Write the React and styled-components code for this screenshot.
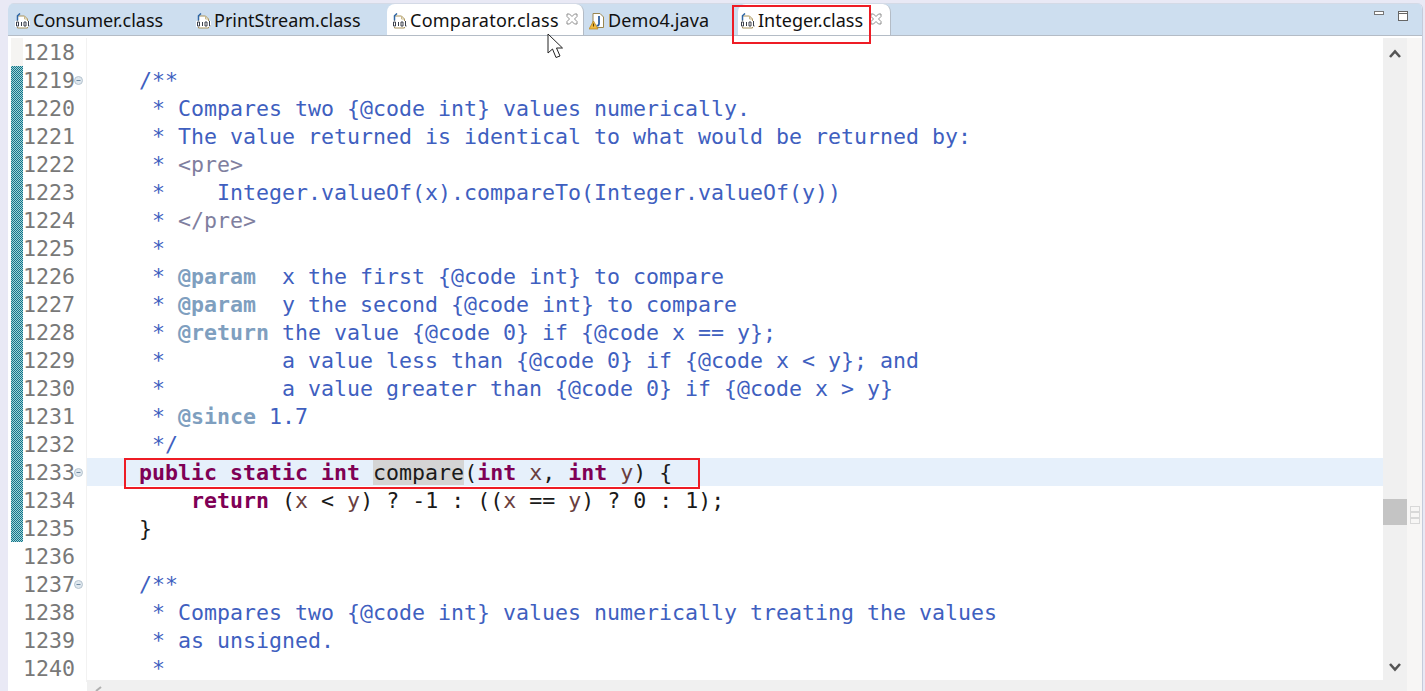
import React from 'react';
import styled, { createGlobalStyle } from 'styled-components';

const GlobalStyle = createGlobalStyle`
  html, body {
    margin: 0;
    padding: 0;
    background: #e9e9f5;
    overflow: hidden;
  }
`;

const Page = styled.div`
  position: relative;
  width: 1425px;
  height: 691px;
  padding: 3px 2px 0 8px;
  box-sizing: border-box;
`;

const Panel = styled.div`
  height: 100%;
  display: flex;
  flex-direction: column;
  background: #fff;
  border-radius: 6px 6px 0 0;
  border-right: 1px solid #c5cbdb;
  overflow: hidden;
`;

const TabBar = styled.div`
  flex: none;
  height: 33px;
  display: flex;
  align-items: flex-end;
  background: #cddeef;
  border-bottom: 1px solid #b4bcc6;
  border-top: 1px solid #d4dae6;
  box-sizing: border-box;
`;

const Tab = styled.div`
  width: ${(p) => p.$w}px;
  height: 31px;
  padding: 2px 0 0 ${(p) => p.$pad}px;
  box-sizing: border-box;
  display: flex;
  align-items: center;
  gap: 3px;
  flex: none;
  background: ${(p) => (p.$open ? '#fff' : 'transparent')};
  border-radius: ${(p) => (p.$open ? '8px 8px 0 0' : '0')};
  border-right: ${(p) => (p.$open ? '1px solid #b4bcc6' : 'none')};
  font-family: "Noto Sans", sans-serif;
  font-size: 18px;
  color: #111;
`;

const TabLabel = styled.span`
  line-height: 29px;
  letter-spacing: ${(p) => p.$track || 0}px;
`;

const CloseMark = styled.svg`
  width: 12px;
  height: 12px;
  margin-left: 4px;
  margin-top: -3px;
`;

const TabActions = styled.div`
  margin-left: auto;
  align-self: flex-start;
  display: flex;
  align-items: flex-start;
  gap: 13px;
  padding: 7px 13px 0 0;
`;

const Editor = styled.div`
  flex: 1;
  min-height: 0;
  display: flex;
  padding-top: 2px;
  position: relative;
`;

const Lines = styled.div`
  flex: none;
  width: 1375px;
  overflow: hidden;
`;

const Row = styled.div`
  display: flex;
  height: 28px;
`;

const Ruler = styled.div`
  flex: none;
  width: 12px;
  margin-left: 3px;
  background: ${(p) => {
    if (p.$changed) return 'repeating-conic-gradient(#16708c 0 25%, #9ed6d4 0 50%) 0 0 / 2px 2px';
    return p.$tinted ? '#f5f4f2' : 'transparent';
  }};
`;

const LineNo = styled.div`
  flex: none;
  width: 51px;
  font: 21.6px/30px "DejaVu Sans Mono", monospace;
  color: #787878;
  box-sizing: border-box;
`;

const FoldCell = styled.div`
  flex: none;
  width: 9px;
  display: flex;
  align-items: center;
  justify-content: center;
`;

const FoldIcon = styled.svg`
  width: 9px;
  height: 9px;
`;

const Spacer = styled.div`
  flex: none;
  width: 4px;
  border-right: 1px solid #f2f2f2;
  box-sizing: border-box;
`;

const Code = styled.div`
  flex: 1;
  background: ${(p) => (p.$current ? '#e6f0fb' : 'transparent')};
  font: 21.6px/30px "DejaVu Sans Mono", monospace;
  color: #1a1a1a;
  white-space: pre;
  height: 28px;
`;

const Doc = styled.span`
  color: #3f5fbf;
`;

const Tag = styled.span`
  color: #7f9fbf;
  font-weight: bold;
`;

const Html = styled.span`
  color: #7f7f9f;
`;

const Keyword = styled.span`
  color: #7f0055;
  font-weight: bold;
`;

const Param = styled.span`
  color: #6a3e3e;
`;

const Occurrence = styled.span`
  background: #d4d4d4;
`;

const VScroll = styled.div`
  flex: none;
  width: 24px;
  background: #f0f0f0;
  display: flex;
  flex-direction: column;
  align-items: center;
`;

const Arrow = styled.svg`
  width: 12px;
  height: 9px;
  margin-top: ${(p) => p.$top}px;
`;

const Thumb = styled.div`
  width: 24px;
  height: 26px;
  margin-top: 441px;
  background: #c4c4c4;
`;

const Overview = styled.div`
  flex: none;
  width: 15px;
  background: #f7f6f5;
  display: flex;
  flex-direction: column;
  align-items: center;
`;

const Grip = styled.div`
  width: 8px;
  height: 4px;
  border: 1px solid #d8d8d8;
  margin-top: ${(p) => p.$top}px;
`;

const HScroll = styled.div`
  position: absolute;
  left: 79px;
  right: 39px;
  bottom: 0;
  height: 11px;
  background: #f0f0f0;
`;

const LeftArrow = styled.svg`
  position: absolute;
  left: 8px;
  bottom: 0;
  width: 8px;
  height: 5px;
`;

const RedBox = styled.div`
  position: absolute;
  left: ${(p) => p.$x}px;
  top: ${(p) => p.$y}px;
  width: ${(p) => p.$w}px;
  height: ${(p) => p.$h}px;
  border: 2px solid #ee1c25;
  box-sizing: border-box;
  pointer-events: none;
`;

const Cursor = styled.svg`
  position: absolute;
  left: 547px;
  top: 33px;
  width: 20px;
  height: 28px;
`;

const ClassIcon = () => (
  <svg width="15" height="16" viewBox="0 0 15 16">
    <path d="M2.5 8 V3 H9.5 L12.5 6 V15 H2.5 V13" fill="#fff" stroke="#a8925a" strokeWidth="1" />
    <path d="M9.5 3 V6 H12.5" fill="none" stroke="#c9b98a" strokeWidth="1" />
    <path d="M5 0.5 L2.5 2.8 V7.5" fill="none" stroke="#2f66a5" strokeWidth="1.5" />
    <rect x="0" y="8" width="15" height="6" fill="#fff" />
    <path d="M1.5 9 h2 v4 h-2 z M6.5 9 v4 M9 9 h2 v4 h-2 z M13.5 8 v5 h1" fill="none" stroke="#3a3f4a" strokeWidth="1" />
  </svg>
);

const JavaIcon = () => (
  <svg width="16" height="18" viewBox="0 0 16 18">
    <path d="M4 1.5 H11 L14.5 5 V15.5 H4 Z" fill="#fff" stroke="#9a8650" strokeWidth="1" />
    <path d="M10 4 V11.5 Q10 14 7.5 13.5" fill="none" stroke="#2f5f9f" strokeWidth="1.8" />
    <path d="M4.5 9 L9 17 H0 Z" fill="#f0b93f" stroke="#b48420" strokeWidth="0.7" />
    <path d="M4.5 11.5 V14.5" stroke="#5a3d00" strokeWidth="1.1" />
  </svg>
);

const Close = () => (
  <CloseMark viewBox="0 0 12 12">
    <path d="M1 1 H3.5 L6 3.5 L8.5 1 H11 V3.5 L8.5 6 L11 8.5 V11 H8.5 L6 8.5 L3.5 11 H1 V8.5 L3.5 6 L1 3.5 Z" fill="#fff" stroke="#8d8d8d" strokeWidth="1" />
  </CloseMark>
);

const Fold = () => (
  <FoldIcon viewBox="0 0 9 9">
    <circle cx="4.5" cy="4.5" r="4" fill="#dfe7ee" stroke="#b4c2ce" strokeWidth="1" />
    <path d="M2.5 4.5 H6.5" stroke="#6f8ba3" strokeWidth="1" />
  </FoldIcon>
);

const D = ({ children }) => <Doc>{children}</Doc>;
const K = ({ children }) => <Keyword>{children}</Keyword>;
const P = ({ children }) => <Param>{children}</Param>;
const T = ({ children }) => <Tag>{children}</Tag>;
const H = ({ children }) => <Html>{children}</Html>;

const lines = [
  { n: 1218 },
  { n: 1219, fold: true, c: <D>{'    /**'}</D> },
  { n: 1220, c: <D>{'     * Compares two {@code int} values numerically.'}</D> },
  { n: 1221, c: <D>{'     * The value returned is identical to what would be returned by:'}</D> },
  { n: 1222, c: <><D>{'     * '}</D><H>{'<pre>'}</H></> },
  { n: 1223, c: <D>{'     *    Integer.valueOf(x).compareTo(Integer.valueOf(y))'}</D> },
  { n: 1224, c: <><D>{'     * '}</D><H>{'</pre>'}</H></> },
  { n: 1225, c: <D>{'     *'}</D> },
  { n: 1226, c: <><D>{'     * '}</D><T>@param</T><D>{'  x the first {@code int} to compare'}</D></> },
  { n: 1227, c: <><D>{'     * '}</D><T>@param</T><D>{'  y the second {@code int} to compare'}</D></> },
  { n: 1228, c: <><D>{'     * '}</D><T>@return</T><D>{' the value {@code 0} if {@code x == y};'}</D></> },
  { n: 1229, c: <D>{'     *         a value less than {@code 0} if {@code x < y}; and'}</D> },
  { n: 1230, c: <D>{'     *         a value greater than {@code 0} if {@code x > y}'}</D> },
  { n: 1231, c: <><D>{'     * '}</D><T>@since</T><D>{' 1.7'}</D></> },
  { n: 1232, c: <D>{'     */'}</D> },
  {
    n: 1233,
    fold: true,
    current: true,
    c: <>{'    '}<K>public</K> <K>static</K> <K>int</K> <Occurrence>compare</Occurrence>(<K>int</K> <P>x</P>, <K>int</K> <P>y</P>{') {'}</>,
  },
  {
    n: 1234,
    c: <>{'        '}<K>return</K> (<P>x</P> {'<'} <P>y</P>) ? -1 : ((<P>x</P> == <P>y</P>) ? 0 : 1);</>,
  },
  { n: 1235, c: <>{'    }'}</> },
  { n: 1236 },
  { n: 1237, fold: true, c: <D>{'    /**'}</D> },
  { n: 1238, c: <D>{'     * Compares two {@code int} values numerically treating the values'}</D> },
  { n: 1239, c: <D>{'     * as unsigned.'}</D> },
  { n: 1240, c: <D>{'     *'}</D> },
];

const App = () => (
  <Page>
    <GlobalStyle />
    <Panel>
      <TabBar>
        <Tab $w={181} $pad={7}><ClassIcon /><TabLabel>Consumer.class</TabLabel></Tab>
        <Tab $w={198} $pad={7}><ClassIcon /><TabLabel>PrintStream.class</TabLabel></Tab>
        <Tab $open $w={197} $pad={5}><ClassIcon /><TabLabel $track={0.25}>Comparator.class</TabLabel><Close /></Tab>
        <Tab $w={154} $pad={5}><JavaIcon /><TabLabel $track={0.1}>Demo4.java</TabLabel></Tab>
        <Tab $open $w={153} $pad={2}><ClassIcon /><TabLabel>Integer.class</TabLabel><Close /></Tab>
        <TabActions>
          <svg width="11" height="5" viewBox="0 0 11 5"><rect x="0.5" y="0.5" width="9" height="3" fill="#fff" stroke="#777" /></svg>
          <svg width="11" height="11" viewBox="0 0 11 11"><rect x="0.5" y="0.5" width="9" height="9" fill="#fff" stroke="#666" /><path d="M0 2.5 H10" stroke="#666" /></svg>
        </TabActions>
      </TabBar>
      <Editor>
        <Lines>
          {lines.map((l) => (
            <Row key={l.n}>
              <Ruler $changed={l.n >= 1219 && l.n <= 1235} $tinted={l.n === 1218} />
              <LineNo>{l.n}</LineNo>
              <FoldCell>{l.fold && <Fold />}</FoldCell>
              <Spacer />
              <Code $current={l.current}>{l.c}</Code>
            </Row>
          ))}
        </Lines>
        <VScroll>
          <Arrow $top={11} viewBox="0 0 12 9"><path d="M1 8 L6 2.5 L11 8" fill="none" stroke="#555" strokeWidth="2.6" /></Arrow>
          <Thumb />
          <Arrow $top={138} viewBox="0 0 12 9"><path d="M1 1 L6 6.5 L11 1" fill="none" stroke="#555" strokeWidth="2.6" /></Arrow>
        </VScroll>
        <Overview>
          <Grip $top={468} />
          <Grip $top={0} />
          <Grip $top={0} />
        </Overview>
        <HScroll>
          <LeftArrow viewBox="0 0 8 5"><path d="M1 5 L6 1" stroke="#b0b0b0" strokeWidth="2" /></LeftArrow>
        </HScroll>
      </Editor>
    </Panel>
    <RedBox $x={732} $y={5} $w={139} $h={39} />
    <RedBox $x={124} $y={458} $w={576} $h={31} />
    <Cursor viewBox="0 0 20 28">
      <path d="M1 1 V20 L5.5 16 L9 24.5 L13 23 L9.5 15 H15.5 Z" fill="#fff" stroke="#222" strokeWidth="1" />
    </Cursor>
  </Page>
);

export default App;
